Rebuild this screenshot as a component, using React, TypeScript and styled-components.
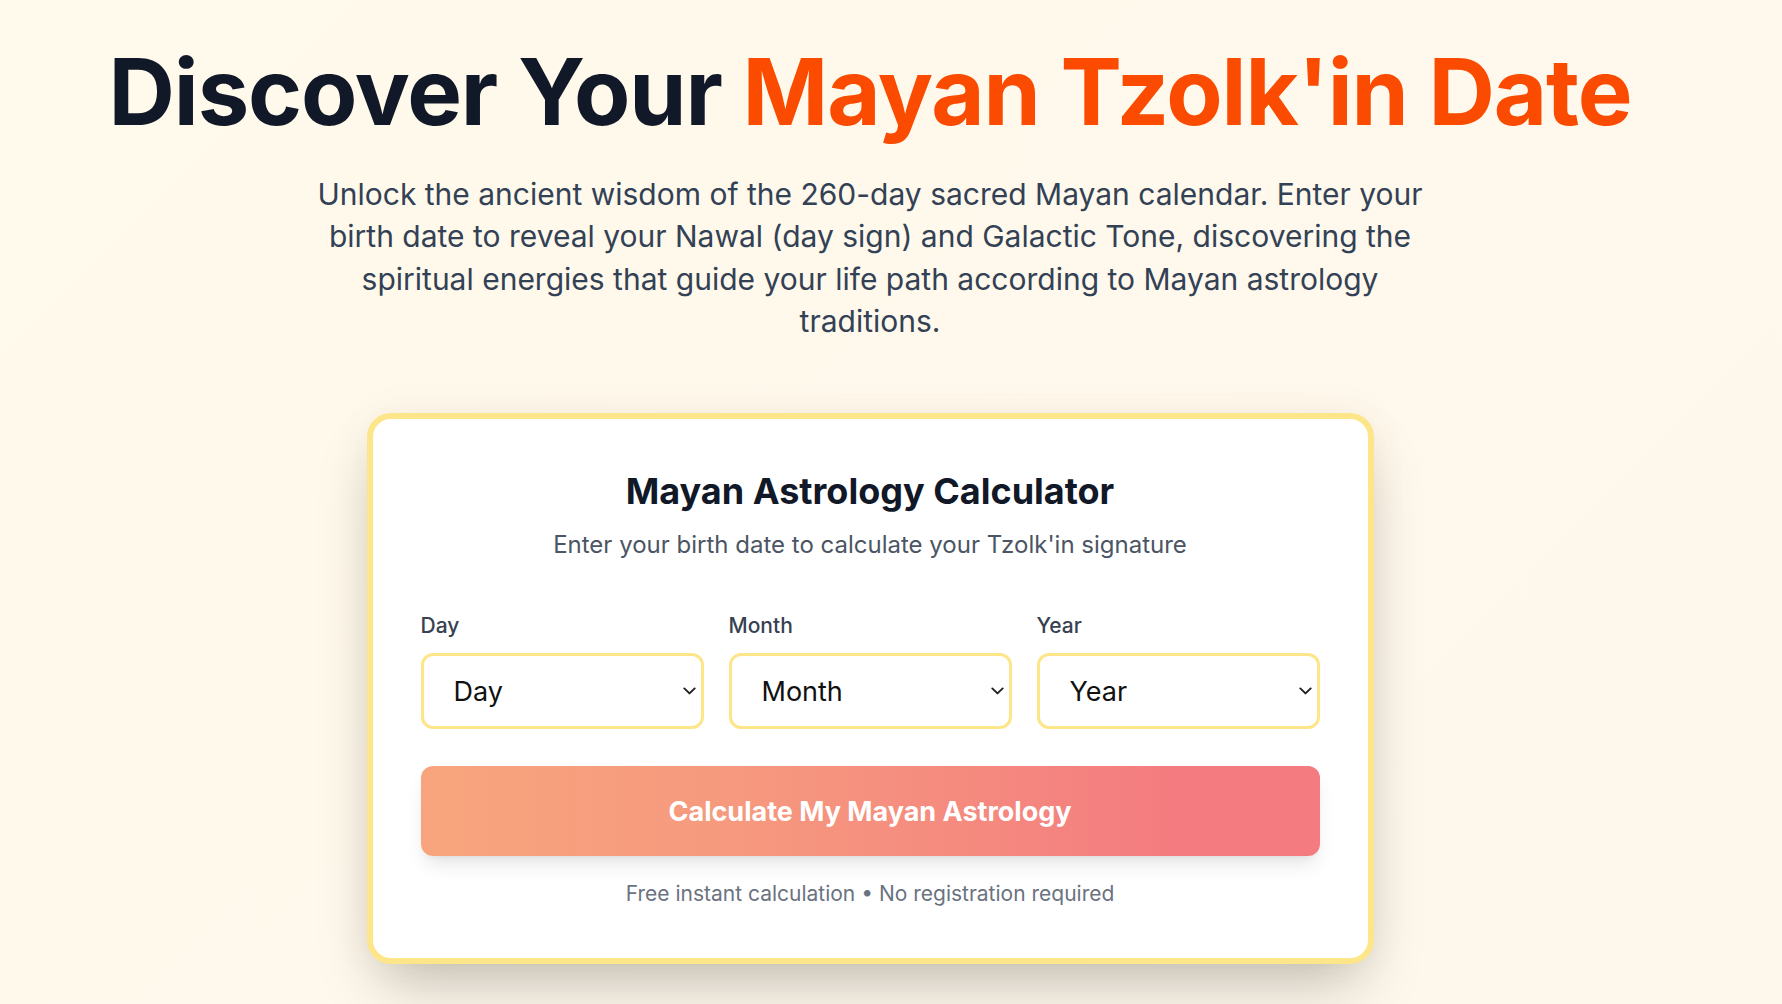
import React from "react";
import styled, { createGlobalStyle } from "styled-components";

const GlobalStyle = createGlobalStyle`
  * { box-sizing: border-box; }
  html, body { margin: 0; padding: 0; }
  body {
    min-height: 100vh;
    font-family: Inter, "Noto Sans", "Liberation Sans", sans-serif;
    background: linear-gradient(135deg, #fffaeb 0%, #fff8ec 50%, #fef8ec 100%);
    background-attachment: fixed;
  }
`;

const Page = styled.main`
  display: flex;
  flex-direction: column;
  align-items: center;
  padding: 41px 42px 80px 0;
`;

const Heading = styled.h1`
  margin: 0;
  font-size: 92px;
  line-height: 101px;
  font-weight: 700;
  letter-spacing: -0.012em;
  color: #111827;
  text-align: center;
  white-space: nowrap;
`;

const Accent = styled.span`
  color: #fa4b00;
`;

const Lead = styled.p`
  margin: 31px 0 0;
  max-width: 1125px;
  font-size: 30px;
  line-height: 42.3px;
  color: #334155;
  text-align: center;
`;

const Card = styled.section`
  margin-top: 71px;
  width: 1007px;
  background: #ffffff;
  border: 6px solid #fde68a;
  border-radius: 24px;
  padding: 50px 48px 48px;
  box-shadow: 0 31px 62px -15px rgba(0, 0, 0, 0.25), 0 0 40px rgba(120, 90, 40, 0.05);
`;

const CardTitle = styled.h2`
  margin: 0;
  font-size: 36px;
  line-height: 44.4px;
  font-weight: 700;
  color: #111827;
  text-align: center;
`;

const CardSubtitle = styled.p`
  margin: 14px 0 0;
  font-size: 24px;
  line-height: 34.5px;
  color: #4b5563;
  text-align: center;
`;

const FieldGrid = styled.div`
  margin-top: 50px;
  display: grid;
  grid-template-columns: repeat(3, 1fr);
  gap: 25px;
`;

const Field = styled.div`
  display: flex;
  flex-direction: column;
  gap: 13px;
`;

const Label = styled.label`
  font-size: 21px;
  line-height: 28px;
  font-weight: 500;
  color: #374151;
`;

const SelectWrap = styled.div`
  position: relative;
`;

const Select = styled.select`
  appearance: none;
  -webkit-appearance: none;
  width: 100%;
  height: 76px;
  border: 3px solid #fde68a;
  border-radius: 12px;
  background: #ffffff;
  padding: 0 44px 0 30px;
  font-family: Inter, "Noto Sans", "Liberation Sans", sans-serif;
  font-size: 27px;
  color: #111111;
  outline: none;
`;

const Chevron = styled.svg`
  position: absolute;
  right: 8px;
  top: 50%;
  width: 13px;
  height: 8px;
  margin-top: -4px;
  pointer-events: none;
`;

const SubmitButton = styled.button`
  margin-top: 37px;
  width: 100%;
  height: 90px;
  border: none;
  border-radius: 12px;
  background: linear-gradient(90deg, #f8a57d 0%, #f6997e 35%, #f5897f 62%, #f47b80 85%, #f47b80 100%);
  color: #ffffff;
  font-family: Inter, "Noto Sans", "Liberation Sans", sans-serif;
  font-size: 27px;
  font-weight: 700;
  box-shadow: 0 12px 20px -4px rgba(0, 0, 0, 0.1), 0 5px 8px -5px rgba(0, 0, 0, 0.08);
  cursor: pointer;
`;

const Footnote = styled.p`
  margin: 22px 0 0;
  font-size: 21px;
  line-height: 31.5px;
  color: #6b7280;
  text-align: center;
`;

const months = [
  "January", "February", "March", "April", "May", "June",
  "July", "August", "September", "October", "November", "December",
];

function DateSelect({ label, options }: { label: string; options: string[] }) {
  const id = `sel-${label.toLowerCase()}`;
  return (
    <Field>
      <Label htmlFor={id}>{label}</Label>
      <SelectWrap>
        <Select id={id} defaultValue="">
          <option value="">{label}</option>
          {options.map((o) => (
            <option key={o} value={o}>
              {o}
            </option>
          ))}
        </Select>
        <Chevron viewBox="0 0 13 8" fill="none">
          <path d="M1.3 1.4 L6.5 6.4 L11.7 1.4" stroke="#1f1f1f" strokeWidth="1.9" strokeLinecap="round" strokeLinejoin="round" />
        </Chevron>
      </SelectWrap>
    </Field>
  );
}

export default function App() {
  const days = Array.from({ length: 31 }, (_, i) => String(i + 1));
  const years = Array.from({ length: 126 }, (_, i) => String(2025 - i));
  return (
    <>
      <GlobalStyle />
      <Page>
        <Heading>
          Discover Your <Accent>Mayan Tzolk'in Date</Accent>
        </Heading>
        <Lead>
          Unlock the ancient wisdom of the 260-day sacred Mayan calendar. Enter your birth date to
          reveal your Nawal (day sign) and Galactic Tone, discovering the spiritual energies that
          guide your life path according to Mayan astrology traditions.
        </Lead>
        <Card>
          <CardTitle>Mayan Astrology Calculator</CardTitle>
          <CardSubtitle>Enter your birth date to calculate your Tzolk'in signature</CardSubtitle>
          <FieldGrid>
            <DateSelect label="Day" options={days} />
            <DateSelect label="Month" options={months} />
            <DateSelect label="Year" options={years} />
          </FieldGrid>
          <SubmitButton type="button">Calculate My Mayan Astrology</SubmitButton>
          <Footnote>Free instant calculation • No registration required</Footnote>
        </Card>
      </Page>
    </>
  );
}
